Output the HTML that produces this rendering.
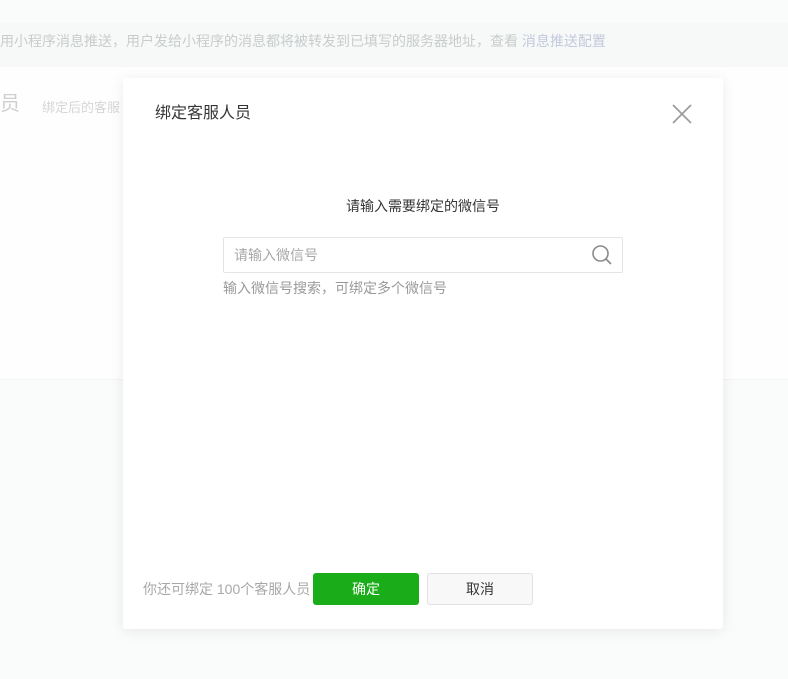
<!DOCTYPE html>
<html><head><meta charset="utf-8"><style>
*{margin:0;padding:0;box-sizing:border-box}
body{width:788px;height:679px;overflow:hidden;background:#fafbfb;font-family:"Liberation Sans","Noto Sans CJK SC",sans-serif;position:relative}
.abs{position:absolute}
</style></head><body>
<div class="abs" style="left:0;top:0;width:788px;height:23px;background:#fafcfc"></div>
<div class="abs" style="left:0;top:23px;width:788px;height:44px;background:#f7f9f9"></div>
<div class="abs" style="left:0;top:32px;font-size:14px;color:#c9cccc;white-space:nowrap;line-height:18px">用小程序消息推送，用户发给小程序的消息都将被转发到已填写的服务器地址，查看 <span style="color:#c3c9dc">消息推送配置</span></div>
<div class="abs" style="left:0;top:67px;width:788px;height:313px;background:#fefefe;border-bottom:1px solid #f2f4f4"></div>
<div class="abs" style="left:0;top:92px;font-size:20px;color:#cfcfcf;line-height:24px">员</div>
<div class="abs" style="left:42px;top:97px;font-size:13px;color:#d6d6d6;white-space:nowrap">绑定后的客服</div>
<div class="abs" style="left:123px;top:78px;width:600px;height:551px;background:#fff;border-radius:3px;box-shadow:0 2px 14px rgba(0,0,0,0.08)">
  <div class="abs" style="left:32px;top:26px;font-size:16px;color:#353535;line-height:20px">绑定客服人员</div>
  <svg class="abs" style="left:549px;top:26px" width="20" height="20" viewBox="0 0 20 20"><path d="M1 1L19 19M19 1L1 19" stroke="#9a9a9a" stroke-width="1.6"/></svg>
  <div class="abs" style="left:0;top:119px;width:600px;text-align:center;font-size:14px;color:#353535;line-height:18px">请输入需要绑定的微信号</div>
  <div class="abs" style="left:100px;top:159px;width:400px;height:36px;border:1px solid #e4e4e4;border-radius:2px">
    <div class="abs" style="left:10px;top:9px;font-size:14px;color:#a8a8a8;line-height:17px">请输入微信号</div>
    <svg class="abs" style="left:367px;top:6px" width="22" height="22" viewBox="0 0 22 22"><circle cx="9.5" cy="9.5" r="7.5" fill="none" stroke="#8a8a8a" stroke-width="1.6"/><path d="M15 15L20 20" stroke="#8a8a8a" stroke-width="1.6"/></svg>
  </div>
  <div class="abs" style="left:100px;top:201px;font-size:14px;color:#9a9a9a;line-height:18px">输入微信号搜索，可绑定多个微信号</div>
  <div class="abs" style="left:20px;top:502px;font-size:14px;color:#a8a8a8;white-space:nowrap;line-height:18px">你还可绑定 100个客服人员</div>
  <div class="abs" style="left:190px;top:495px;width:106px;height:32px;background:#1aad19;border-radius:3px;color:#fff;font-size:14px;text-align:center;line-height:32px">确定</div>
  <div class="abs" style="left:304px;top:495px;width:106px;height:32px;background:#f8f8f8;border:1px solid #e2e2e2;border-radius:3px;color:#353535;font-size:14px;text-align:center;line-height:30px">取消</div>
</div>
</body></html>
